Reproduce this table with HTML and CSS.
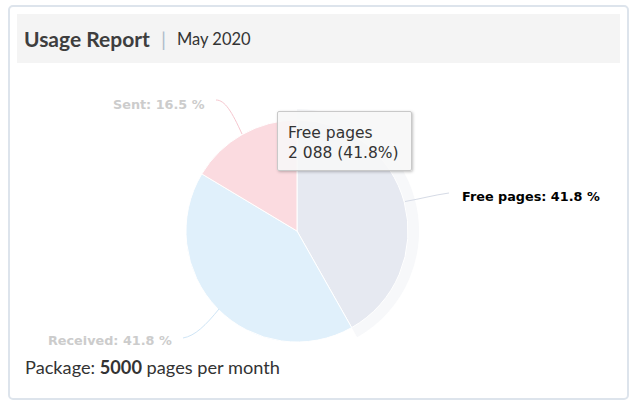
FILE: index.html
```html
<!DOCTYPE html>
<html>
<head>
<meta charset="utf-8">
<title>Usage Report</title>
<link rel="stylesheet" href="styles.css">
</head>
<body>
<div class="card">
  <div class="card-header">
    <span class="title">Usage Report</span>
    <span class="sep">|</span>
    <span class="period">May 2020</span>
  </div>
  <div class="chart">
    <svg class="chart-svg" width="603" height="287" viewBox="0 0 603 287">
      <g transform="translate(-17,-63)">
        <!-- hover halo -->
        <path class="halo" d="M 297 109 A 122 122 0 0 1 357.1 337.2 L 351.7 327.6 A 111 111 0 0 0 297 120 Z"/>
        <!-- slices -->
        <path class="slice free" d="M 297 231 L 297 120 A 111 111 0 0 1 351.7 327.6 Z"/>
        <path class="slice received" d="M 297 231 L 351.7 327.6 A 111 111 0 0 1 201.8 173.9 Z"/>
        <path class="slice sent" d="M 297 231 L 201.8 173.9 A 111 111 0 0 1 297 120 Z"/>
        <!-- connectors -->
        <path class="conn conn-sent" d="M 216 100 C 225 100 232 112 242 134"/>
        <path class="conn conn-free" d="M 405 201.5 C 420 199 434 195 449 193"/>
        <path class="conn conn-received" d="M 183 338 C 195 336 206 325 219 309"/>
        <!-- labels -->
        <text class="lbl lbl-muted" x="113" y="109">Sent: 16.5 %</text>
        <text class="lbl lbl-active" x="462" y="201">Free pages: 41.8 %</text>
        <text class="lbl lbl-muted" x="48" y="345">Received: 41.8 %</text>
      </g>
    </svg>
    <div class="tooltip">
      <div>Free pages</div>
      <div>2 088 (41.8%)</div>
    </div>
  </div>
  <div class="card-footer">Package: <b>5000</b> pages per month</div>
</div>
</body>
</html>
```
FILE: styles.css
```css
html, body {
  margin: 0;
  padding: 0;
  background: #ffffff;
}

body {
  font-family: "Lato", "Liberation Sans", sans-serif;
  color: #333;
}

.card {
  box-sizing: border-box;
  width: 621px;
  height: 395px;
  margin: 5px 0 0 8px;
  padding: 7px;
  border: 2px solid #dde4ec;
  border-radius: 5px;
  background: #fff;
}

.card-header {
  height: 49px;
  background: #f4f4f4;
  display: flex;
  align-items: center;
  padding-left: 7px;
  color: #3e3e3e;
}

.title {
  font-weight: 700;
  font-size: 21px;
}

.sep {
  color: #b0bdca;
  font-size: 20px;
  margin: 0 11px 0 11px;
}

.period {
  font-size: 16.5px;
  color: #333;
}

.chart {
  position: relative;
  height: 287px;
}

.chart-svg {
  display: block;
}

.slice {
  stroke: #ffffff;
  stroke-width: 1;
  stroke-linejoin: round;
}

.free { fill: #e6e9f1; }
.received { fill: #e0f0fb; }
.sent { fill: #fbdbe0; }

.halo {
  fill: #f7f8fa;
}

.conn {
  fill: none;
  stroke-width: 1;
}

.conn-sent { stroke: #f6c7cf; }
.conn-free { stroke: #d6dbe6; }
.conn-received { stroke: #cfe5f6; }

.lbl {
  font-family: "DejaVu Sans", Verdana, sans-serif;
  font-weight: 700;
  font-size: 12.8px;
}

.lbl-muted { fill: #cccccc; }
.lbl-active { fill: #000000; }

.tooltip {
  position: absolute;
  left: 260px;
  top: 48px;
  box-sizing: border-box;
  width: 135px;
  height: 60px;
  padding: 11px 0 0 10px;
  background: rgba(247, 247, 247, 0.88);
  border: 1px solid #c9c9c9;
  border-radius: 2px;
  box-shadow: 1px 1px 3px rgba(0, 0, 0, 0.25);
  font-family: "DejaVu Sans", Verdana, sans-serif;
  font-size: 15.5px;
  line-height: 20px;
  color: #333;
  white-space: nowrap;
}

.card-footer {
  padding: 5px 0 0 8px;
  font-size: 18.2px;
  line-height: 24px;
  color: #333;
}

.card-footer b {
  font-weight: 700;
}
```
